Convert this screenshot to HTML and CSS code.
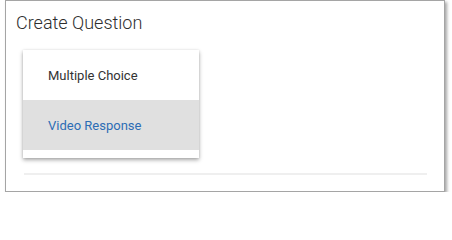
FILE: index.html
```html
<!DOCTYPE html>
<html>
<head>
<meta charset="utf-8">
<link rel="stylesheet" href="styles.css">
</head>
<body>
<div class="dialog">
  <h1 class="title">Create Question</h1>
  <div class="menu">
    <div class="item">Multiple Choice</div>
    <div class="item item-active">Video Response</div>
  </div>
  <div class="divider"></div>
</div>
</body>
</html>
```
FILE: styles.css
```css
html, body {
  margin: 0;
  padding: 0;
  background: #ffffff;
}
body {
  font-family: Roboto, "Liberation Sans", sans-serif;
}
.dialog {
  box-sizing: border-box;
  margin-left: 5px;
  width: 440px;
  height: 192px;
  border: 1px solid #a5a5a5;
  background: #ffffff;
  box-shadow: 2px 2px 3px rgba(0, 0, 0, 0.35);
  padding: 10px 17px 0 17px;
  display: flex;
  flex-direction: column;
}
.title {
  margin: 0 0 0 -7px;
  font-size: 18px;
  line-height: 24px;
  font-weight: 300;
  color: #2e2e2e;
  letter-spacing: 0;
}
.menu {
  margin-top: 15px;
  width: 176px;
  background: #ffffff;
  padding-bottom: 8px;
  box-shadow: 0 2px 4px rgba(0, 0, 0, 0.35), 0 0 2px rgba(0, 0, 0, 0.08);
}
.item {
  height: 50px;
  padding-left: 25px;
  display: flex;
  align-items: center;
  font-size: 13px;
  color: #333333;
}
.item-active {
  background: #e0e0e0;
  color: #2d6db5;
}
.divider {
  margin-top: 15px;
  margin-left: 1px;
  height: 2px;
  background: #efefef;
}
```
